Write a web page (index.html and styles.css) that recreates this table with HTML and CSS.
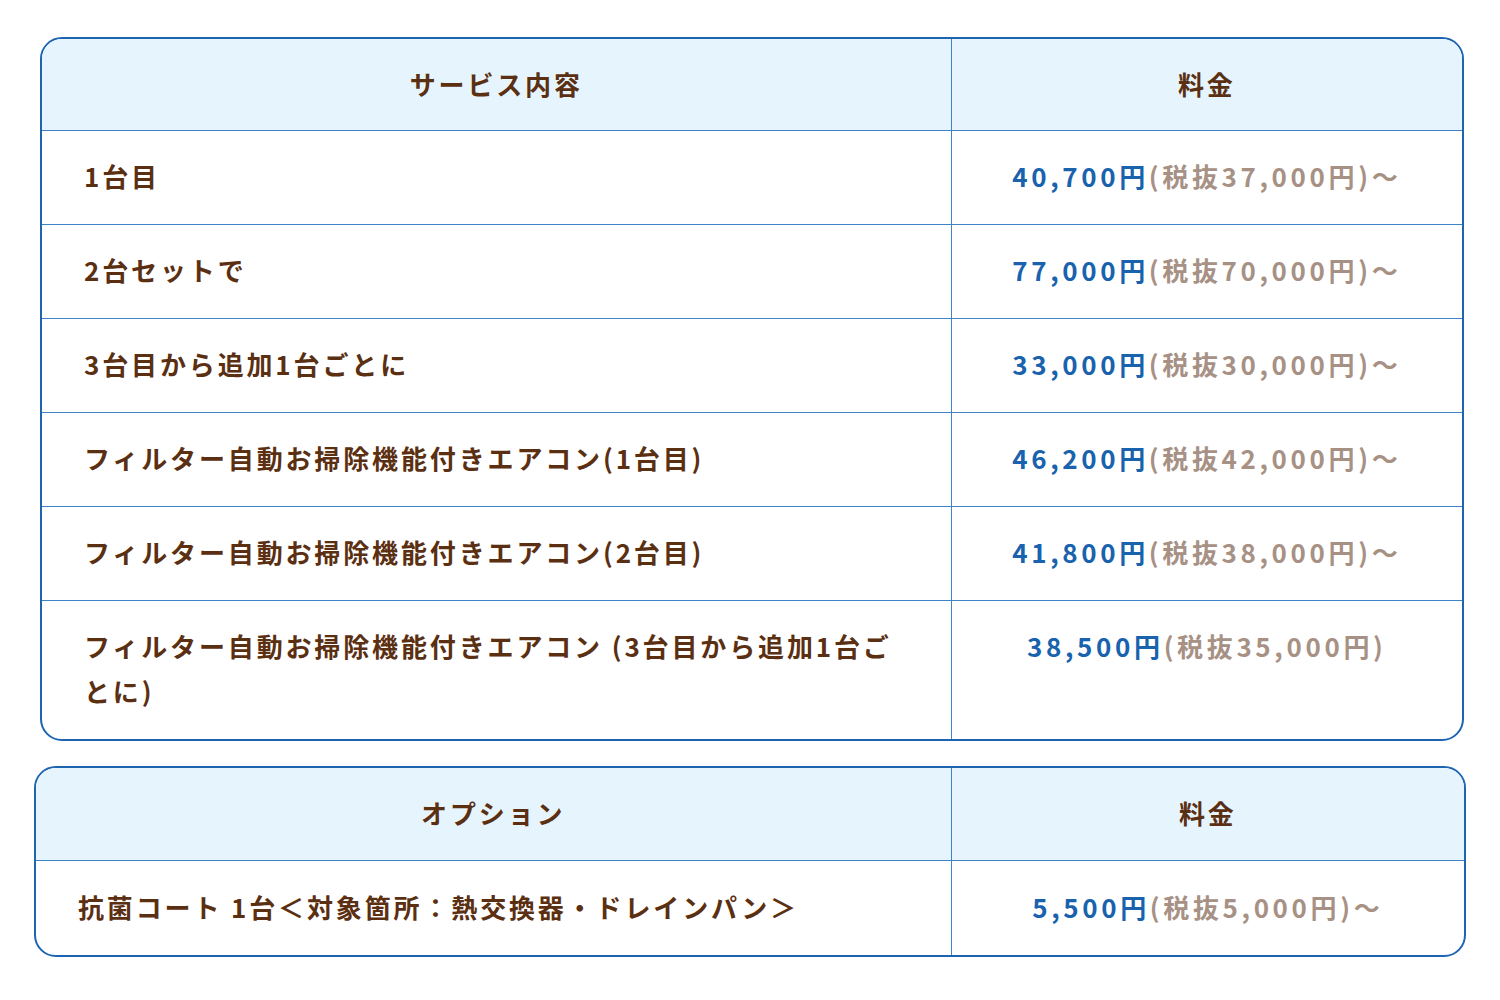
FILE: index.html
```html
<!DOCTYPE html>
<html lang="ja">
<head>
<meta charset="utf-8">
<title>料金表</title>
<link rel="stylesheet" href="styles.css">
</head>
<body>
<div class="page">
  <div class="tbl tbl-main">
    <table>
      <colgroup><col class="c1"><col class="c2"></colgroup>
      <thead>
        <tr><th>サービス内容</th><th>料金</th></tr>
      </thead>
      <tbody>
        <tr><td class="name">1台目</td><td class="price"><span class="in">40,700円</span><span class="ex">(税抜37,000円)～</span></td></tr>
        <tr><td class="name">2台セットで</td><td class="price"><span class="in">77,000円</span><span class="ex">(税抜70,000円)～</span></td></tr>
        <tr><td class="name">3台目から追加1台ごとに</td><td class="price"><span class="in">33,000円</span><span class="ex">(税抜30,000円)～</span></td></tr>
        <tr><td class="name">フィルター自動お掃除機能付きエアコン(1台目)</td><td class="price"><span class="in">46,200円</span><span class="ex">(税抜42,000円)～</span></td></tr>
        <tr><td class="name">フィルター自動お掃除機能付きエアコン(2台目)</td><td class="price"><span class="in">41,800円</span><span class="ex">(税抜38,000円)～</span></td></tr>
        <tr class="last"><td class="name">フィルター自動お掃除機能付きエアコン (3台目から追加1台ごとに)</td><td class="price"><span class="in">38,500円</span><span class="ex">(税抜35,000円)</span></td></tr>
      </tbody>
    </table>
  </div>
  <div class="tbl tbl-opt">
    <table>
      <colgroup><col class="c1"><col class="c2"></colgroup>
      <thead>
        <tr><th>オプション</th><th>料金</th></tr>
      </thead>
      <tbody>
        <tr class="last"><td class="name">抗菌コート 1台＜対象箇所：熱交換器・ドレインパン＞</td><td class="price"><span class="in">5,500円</span><span class="ex">(税抜5,000円)～</span></td></tr>
      </tbody>
    </table>
  </div>
</div>
</body>
</html>
```

FILE: styles.css
```css
html, body {
  margin: 0;
  padding: 0;
  background: #ffffff;
}
body {
  font-family: "Noto Sans CJK JP", "Noto Sans", sans-serif;
  color: #5b2f12;
}
.page {
  padding-top: 37px;
  display: flex;
  flex-direction: column;
  gap: 25px;
}
.tbl {
  border: 2px solid #1d64b1;
  border-radius: 22px;
  overflow: hidden;
  box-sizing: border-box;
}
.tbl-main {
  margin-left: 40px;
  width: 1424px;
}
.tbl-opt {
  margin-left: 34px;
  width: 1432px;
}
table {
  width: 100%;
  border-collapse: collapse;
  table-layout: fixed;
}
.tbl-main .c1 { width: 909px; }
.tbl-opt .c1 { width: 915px; }
th, td {
  font-size: 26px;
  font-weight: 700;
  line-height: 45px;
  letter-spacing: 0.11em;
  padding: 22px 0 26px;
  border-bottom: 1px solid #3e82c7;
  border-right: 1px solid #3e82c7;
  vertical-align: top;
}
th {
  padding: 22px 0 24px;
  background: #e6f5fd;
  text-align: center;
}
th:last-child, td:last-child {
  border-right: none;
}
tr.last td {
  border-bottom: none;
}
.tbl-opt th {
  padding: 22px 0 25px;
}
.tbl-opt td {
  padding: 23px 0 26px;
}
td.name {
  padding-left: 42px;
  padding-right: 44px;
  text-align: left;
}
td.price {
  text-align: center;
  letter-spacing: 0.14em;
}
.in {
  color: #1862ae;
}
.ex {
  color: #a79185;
}
```
